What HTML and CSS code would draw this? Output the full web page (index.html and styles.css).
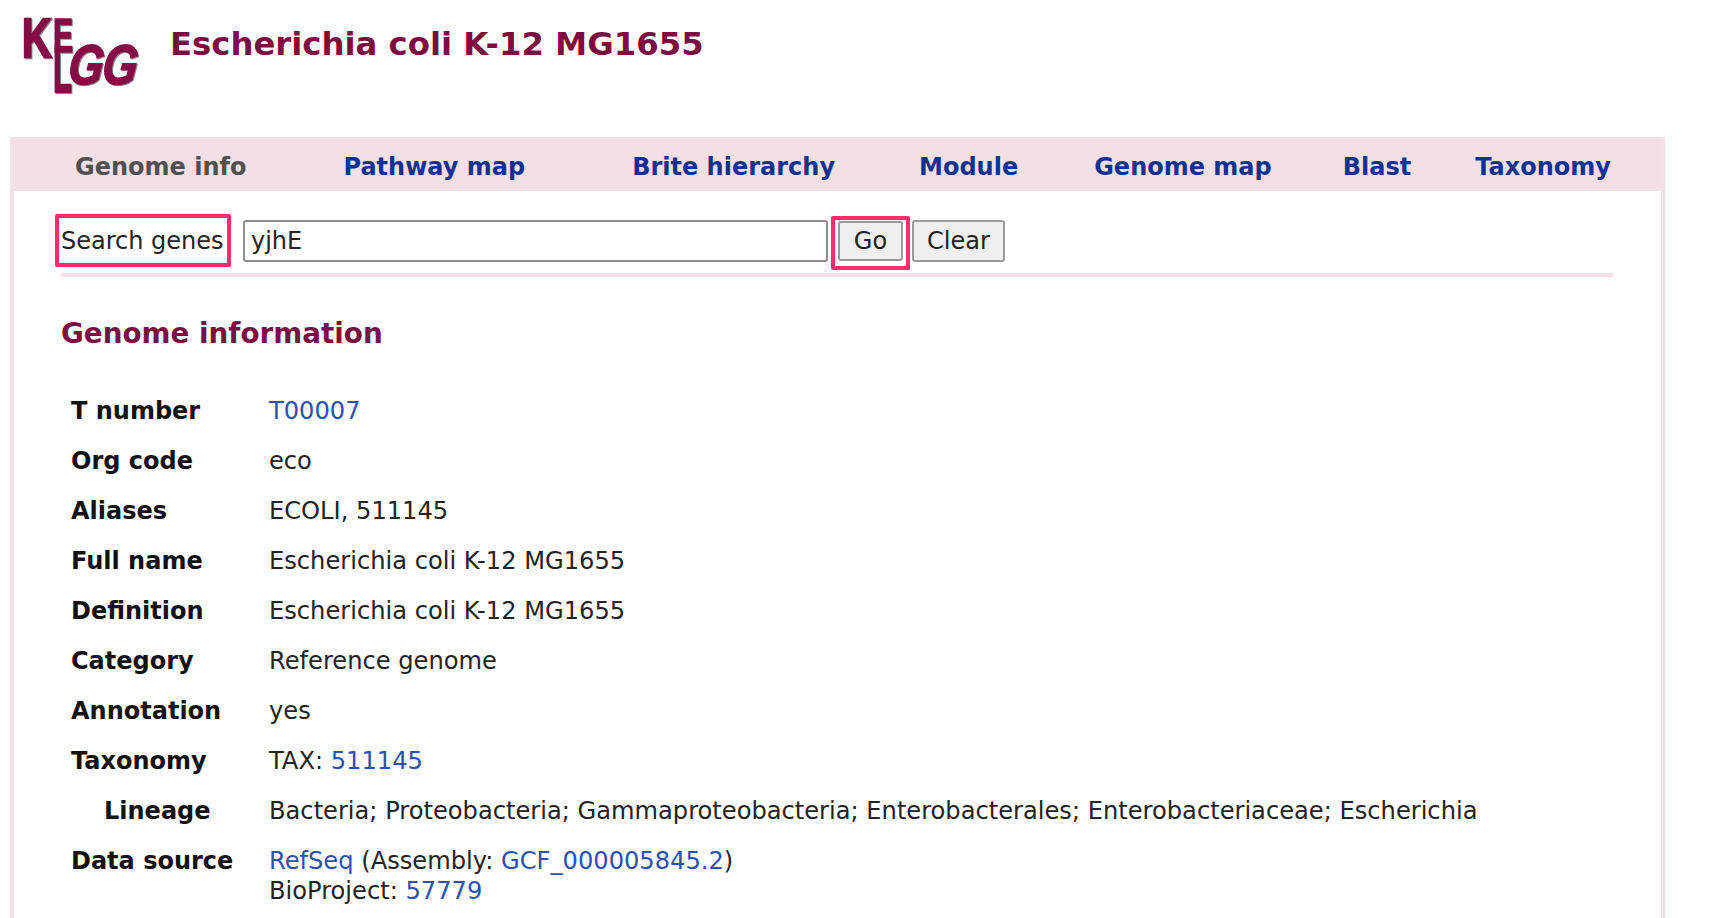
FILE: index.html
```html
<!DOCTYPE html>
<html lang="en">
<head>
    <meta charset="UTF-8">
    <meta name="viewport" content="width=device-width, initial-scale=1.0">
    <title>KEGG - Escherichia coli K-12 MG1655</title>
    <link rel="stylesheet" href="styles.css">
</head>
<body>
    <div class="header">
        <svg class="logo" width="140" height="100" viewBox="0 0 140 100" aria-label="KEGG">
            <g class="logo-fill">
                <text class="logo-k" transform="translate(19 57) scale(.74 1)" font-size="55">K</text>
                <text transform="translate(50 52) scale(.6 .95)" font-size="50">E</text>
                <text transform="translate(50 92) scale(.62 1.3)" font-size="50">L</text>
                <text class="logo-g" transform="translate(64 84) skewX(-6) scale(.8 1)" font-size="56">G</text>
                <text class="logo-g" transform="translate(98 84) skewX(-6) scale(.8 1)" font-size="56">G</text>
            </g>
        </svg>
        <h1 class="title">Escherichia coli K-12 MG1655</h1>
    </div>

    <div class="panel">
        <div class="nav">
            <span class="nav-item current">Genome info</span>
            <a class="nav-item" href="#">Pathway map</a>
            <a class="nav-item" href="#">Brite hierarchy</a>
            <a class="nav-item" href="#">Module</a>
            <a class="nav-item" href="#">Genome map</a>
            <a class="nav-item" href="#">Blast</a>
            <a class="nav-item" href="#">Taxonomy</a>
        </div>

        <form class="search">
            <label class="search-label mark" for="q">Search genes</label>
            <input class="search-input" id="q" type="text" value="yjhE">
            <span class="go-box mark"><button class="btn go" type="button">Go</button></span>
            <button class="btn clear" type="button">Clear</button>
        </form>
        <div class="rule"></div>

        <h2 class="section-title">Genome information</h2>

        <table class="info">
            <tr><th>T number</th><td><a href="#">T00007</a></td></tr>
            <tr><th>Org code</th><td>eco</td></tr>
            <tr><th>Aliases</th><td>ECOLI, 511145</td></tr>
            <tr><th>Full name</th><td>Escherichia coli K-12 MG1655</td></tr>
            <tr><th>Definition</th><td>Escherichia coli K-12 MG1655</td></tr>
            <tr><th>Category</th><td>Reference genome</td></tr>
            <tr><th>Annotation</th><td>yes</td></tr>
            <tr><th>Taxonomy</th><td>TAX: <a href="#">511145</a></td></tr>
            <tr><th class="sub">Lineage</th><td>Bacteria; Proteobacteria; Gammaproteobacteria; Enterobacterales; Enterobacteriaceae; Escherichia</td></tr>
            <tr><th>Data source</th><td><a href="#">RefSeq</a> (Assembly: <a href="#">GCF_000005845.2</a>)<br>BioProject: <a href="#">57779</a></td></tr>
        </table>
    </div>
</body>
</html>
```

FILE: styles.css
```css
html, body {
    height: 100%;
}

body {
    margin: 0;
    overflow: hidden;
    background-color: #fff;
    color: #222;
    font-family: 'DejaVu Sans', Verdana, sans-serif;
    display: flex;
    flex-direction: column;
}

a {
    color: #2a50b4;
    text-decoration: none;
}

.header {
    height: 137px;
    flex: none;
    display: flex;
    align-items: flex-start;
}

.logo {
    flex: none;
    margin-left: 3px;
    filter: drop-shadow(1px 1px 0 #8a8a8a);
}

.logo text {
    font-family: 'Liberation Sans', Arial, sans-serif;
    font-weight: bold;
}

.logo .logo-g {
    font-style: italic;
}

.logo-fill {
    fill: #850c45;
    stroke: #850c45;
    stroke-width: 1.6px;
}

.logo .logo-k {
    stroke-width: 2.4px;
}

.title {
    margin: 24px 0 0 27px;
    font-size: 32.3px;
    line-height: 40px;
    font-weight: bold;
    color: #7d0a40;
    white-space: nowrap;
}

.panel {
    flex: 1;
    margin-left: 10px;
    width: 1655px;
    box-sizing: border-box;
    border-left: 4px solid #f3e1e7;
    border-right: 4px solid #f3e1e7;
}

.nav {
    display: flex;
    align-items: center;
    height: 54px;
    padding-top: 6px;
    box-sizing: border-box;
    padding-left: 61px;
    background-color: #f2e0e5;
    font-size: 24px;
    font-weight: bold;
}

.nav-item {
    color: #0f3292;
    white-space: nowrap;
}

.nav-item.current {
    color: #505050;
}

.nav-item:nth-child(2) { margin-left: 97px; }
.nav-item:nth-child(3) { margin-left: 107px; }
.nav-item:nth-child(4) { margin-left: 84px; }
.nav-item:nth-child(5) { margin-left: 76px; }
.nav-item:nth-child(6) { margin-left: 71px; }
.nav-item:nth-child(7) { margin-left: 64px; }

.search {
    display: flex;
    align-items: center;
    box-sizing: border-box;
    height: 82px;
    margin: 0;
    padding: 17px 0 0 41px;
    font-size: 24px;
}

.mark {
    border: 4px solid #ff2d6b;
    border-radius: 2px;
    box-sizing: border-box;
}

.search-label {
    width: 176px;
    height: 53px;
    padding-left: 2px;
    line-height: 47px;
    color: #222;
    white-space: nowrap;
}

.search-input {
    box-sizing: border-box;
    width: 585px;
    height: 42px;
    margin-left: 12px;
    padding: 0 6px;
    border: 2px solid #8f8f8f;
    border-radius: 3px;
    font: inherit;
    color: #222;
}

.go-box {
    width: 79px;
    height: 54px;
    margin: 4px 0 0 3px;
    padding: 1px 3px 5px;
    display: flex;
}

.btn {
    box-sizing: border-box;
    height: 40px;
    padding: 0;
    border: 2px solid #9a9a9a;
    border-radius: 3px;
    background-color: #efefef;
    font: inherit;
    color: #222;
}

.go {
    width: 65px;
}

.clear {
    width: 93px;
    height: 42px;
    margin-left: 2px;
}

.rule {
    height: 4px;
    margin-left: 47px;
    width: 1552px;
    background-color: #f3e1e7;
}

.section-title {
    margin: 37px 0 0 47px;
    font-size: 27.8px;
    line-height: 40px;
    font-weight: bold;
    color: #7d0a40;
}

.info {
    margin-top: 32px;
    border-collapse: collapse;
    font-size: 24px;
    line-height: 30px;
}

.info th, .info td {
    padding: 10px 0;
    vertical-align: top;
    text-align: left;
    white-space: nowrap;
}

.info th {
    box-sizing: border-box;
    width: 255px;
    padding-left: 57px;
    font-weight: bold;
    color: #111;
}

.info th.sub {
    padding-left: 90px;
}

.info td {
    font-size: 24.15px;
}
```
